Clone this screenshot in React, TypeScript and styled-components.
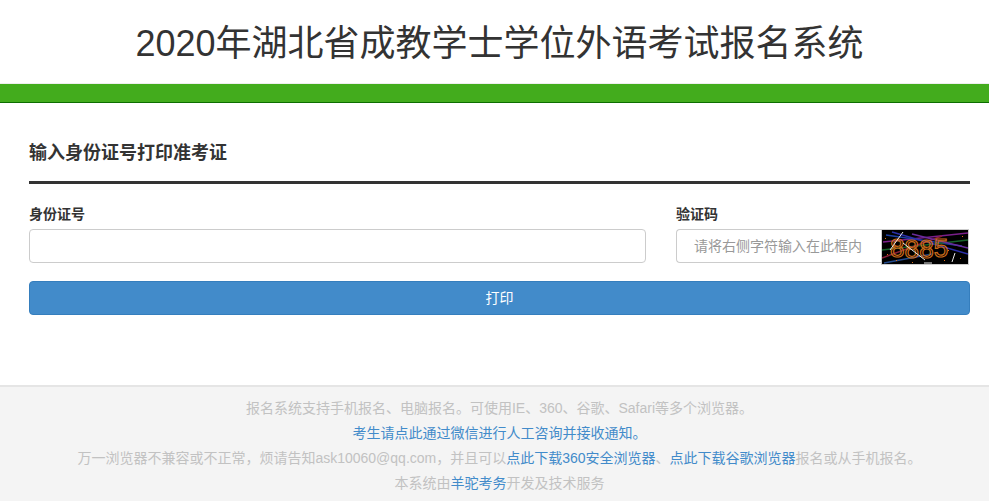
import styled, { createGlobalStyle } from "styled-components";

const GlobalStyle = createGlobalStyle`
  html, body {
    margin: 0;
    padding: 0;
    background: #fff;
    font-family: "Liberation Sans", Arial, "Noto Sans CJK SC", sans-serif;
    color: #333;
  }
  * {
    box-sizing: border-box;
  }
`;

// captcha noise, copied by eye from the reference
const noiseLines = [
  { d: "M1 12 L86 3", c: "#7a1f8a" },
  { d: "M4 5 L80 16", c: "#1d3fa0" },
  { d: "M0 20 L86 10", c: "#17622a" },
  { d: "M10 2 L86 24", c: "#2b2fa8" },
  { d: "M0 28 L60 6", c: "#8a1f3a" },
  { d: "M30 4 L86 18", c: "#6a2c9c" },
  { d: "M2 33 L50 24", c: "#234a8c" },
];

const whiteLines = ["M21 2 L8 20", "M21 13 L43 30", "M73 23 L70 32", "M42 33 L50 33"];

const digits = [
  { ch: "8", x: 8, y: 27 },
  { ch: "8", x: 22.6, y: 28 },
  { ch: "8", x: 37.2, y: 28 },
  { ch: "5", x: 51.8, y: 27 },
];

const specks = [
  [5, 24],
  [14, 30],
  [30, 32],
  [62, 30],
  [78, 28],
  [80, 6],
  [66, 20],
  [3, 8],
];

function Captcha() {
  return (
    <CaptchaBox>
      <svg width="86" height="34" viewBox="0 0 86 34">
        <rect width="86" height="34" fill="#000" />
        {noiseLines.map((l) => (
          <path key={l.d} d={l.d} stroke={l.c} strokeWidth="1.5" fill="none" />
        ))}
        {specks.map(([x, y]) => (
          <rect key={`${x}-${y}`} x={x} y={y} width="1" height="1" fill="#d9701c" />
        ))}
        {digits.map((n) => (
          <text
            key={n.x}
            x={n.x}
            y={n.y}
            fontFamily="Liberation Sans, sans-serif"
            fontSize="26"
            fill="none"
            stroke="#c96a1a"
            strokeWidth="1.2"
          >
            {n.ch}
          </text>
        ))}
        {whiteLines.map((d) => (
          <path key={d} d={d} stroke="#e8e8e8" strokeWidth="1" fill="none" />
        ))}
      </svg>
    </CaptchaBox>
  );
}

export default function App() {
  return (
    <Page>
      <GlobalStyle />
      <Header>2020年湖北省成教学士学位外语考试报名系统</Header>
      <GreenBar />

      <Main>
        <SectionTitle>输入身份证号打印准考证</SectionTitle>
        <Rule />

        <FormRow>
          <Field>
            <Label>身份证号</Label>
            <TextInput type="text" />
          </Field>
          <Field>
            <Label>验证码</Label>
            <CaptchaGroup>
              <CaptchaInput type="text" placeholder="请将右侧字符输入在此框内" />
              <Captcha />
            </CaptchaGroup>
          </Field>
        </FormRow>

        <PrintButton>打印</PrintButton>
      </Main>

      <Footer>
        <FooterLine>报名系统支持手机报名、电脑报名。可使用IE、360、谷歌、Safari等多个浏览器。</FooterLine>
        <FooterLine>
          <FooterLink href="#">考生请点此通过微信进行人工咨询并接收通知。</FooterLink>
        </FooterLine>
        <FooterLine>
          万一浏览器不兼容或不正常，烦请告知ask10060@qq.com，并且可以
          <FooterLink href="#">点此下载360安全浏览器</FooterLink>、
          <FooterLink href="#">点此下载谷歌浏览器</FooterLink>报名或从手机报名。
        </FooterLine>
        <FooterLine>
          本系统由<FooterLink href="#">羊驼考务</FooterLink>开发及技术服务
        </FooterLine>
      </Footer>
    </Page>
  );
}

const Page = styled.div`
  display: flex;
  flex-direction: column;
  min-height: 501px;
`;

const Header = styled.h1`
  margin: 0;
  height: 84px;
  padding: 0 19px 0 29px;
  line-height: 88px;
  text-align: center;
  font-size: 36px;
  font-weight: 400;
  color: #333;
  border-bottom: 1px solid #eee;
`;

const GreenBar = styled.div`
  height: 19px;
  background: #43ac1d;
  border-bottom: 1px solid #0c6e00;
`;

const Main = styled.main`
  padding: 0 19px 0 29px;
  height: 282px;
`;

const SectionTitle = styled.h2`
  margin: 0;
  padding-top: 38px;
  height: 78px;
  line-height: 24px;
  font-size: 18px;
  font-weight: 700;
  color: #333;
`;

const Rule = styled.div`
  height: 3px;
  background: #333;
`;

const FormRow = styled.div`
  display: grid;
  grid-template-columns: 617px 294px;
  column-gap: 30px;
  margin-top: 21px;
`;

const Field = styled.div`
  display: flex;
  flex-direction: column;
`;

const Label = styled.label`
  height: 24px;
  line-height: 18px;
  font-size: 14px;
  font-weight: 700;
  color: #333;
`;

const TextInput = styled.input`
  width: 100%;
  height: 34px;
  padding: 6px 12px;
  background: #fff;
  border: 1px solid #ccc;
  border-radius: 4px;
  outline: none;
`;

const CaptchaGroup = styled.div`
  display: flex;
  align-items: flex-start;
  height: 36px;
`;

const CaptchaInput = styled.input`
  width: 205px;
  height: 34px;
  padding: 0 12px 0 17px;
  font-family: inherit;
  font-size: 14px;
  background: #fff;
  border: 1px solid #ccc;
  border-right: none;
  border-radius: 4px 0 0 4px;
  outline: none;

  &::placeholder {
    color: #999;
    opacity: 1;
  }
`;

const CaptchaBox = styled.div`
  width: 88px;
  height: 36px;
  padding: 1px;
  background: #ccc;
  line-height: 0;
`;

const PrintButton = styled.button`
  display: block;
  width: 941px;
  height: 34px;
  margin-top: 16px;
  padding: 0 0 2px;
  font-family: inherit;
  font-size: 14px;
  color: #fff;
  background: #428bca;
  border: 1px solid #357ebd;
  border-radius: 4px;
`;

const Footer = styled.footer`
  height: 116px;
  padding: 9px 19px 0 29px;
  text-align: center;
  font-size: 14px;
  line-height: 25px;
  color: #c2c2c2;
  background: #f4f4f4;
  border-top: 2px solid #e5e5e5;
`;

const FooterLine = styled.div`
  height: 25px;
`;

const FooterLink = styled.a`
  color: #428bca;
  text-decoration: none;
`;
